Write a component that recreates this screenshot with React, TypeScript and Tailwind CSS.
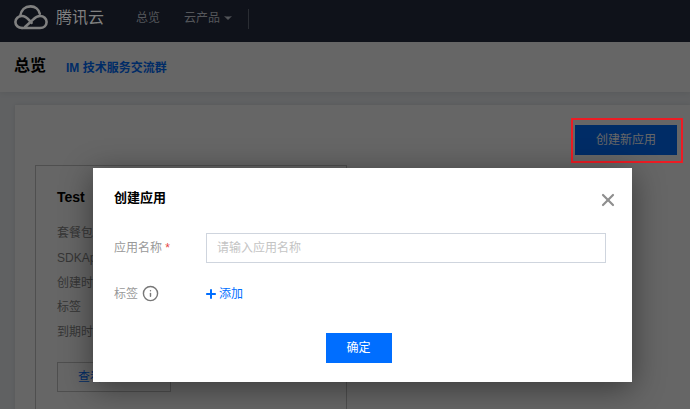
import React from "react";
import { ChevronDown, Info, Plus, X } from "lucide-react";

const cardRows = ["套餐包", "SDKAppID", "创建时间", "标签", "到期时间"];

const Logo: React.FC = () => (
  <svg width="34" height="25" viewBox="0 0 34 25" fill="none" stroke="#808080" strokeWidth="2.6" strokeLinecap="round">
    <path d="M8 23h18c3.8 0 6.6-2.6 6.6-6S29.8 11 26 11c-2.6 0-4.6 1.2-7 3.6L11 22" />
    <path d="M8 23c-3.8 0-6.6-2.6-6.6-6S4.4 11 8 11c3.4 0 5.4 2 7.4 4.3l2.2 2.5" />
    <path d="M6.2 11C7 5.2 11 1.4 16.6 1.4c4.600 0 8.200 3 9.200 7.400" />
  </svg>
);

const App: React.FC = () => {
  return (
    <div className="relative h-[409px] w-[690px] overflow-hidden bg-[#eff2f5] font-['Liberation_Sans','Noto_Sans_CJK_SC',sans-serif] text-xs">
      {/* top bar */}
      <header className="relative z-30 flex h-[42px] items-center bg-[#0f121a] pb-[7px] pl-[14px]">
        <Logo />
        <span className="ml-[8px] text-base leading-none text-[#808080]">腾讯云</span>
        <span className="ml-[32px] text-xs text-[#55575b]">总览</span>
        <span className="ml-[24px] text-xs text-[#55575b]">云产品</span>
        <ChevronDown className="ml-[2px] h-3 w-3 fill-[#55575b] text-[#55575b]" />
        <div className="ml-[14px] mt-[2px] h-[20px] w-px bg-[#2a2d33]" />
      </header>

      {/* sub header */}
      <div className="flex h-[50px] items-center bg-white pb-[2px] pl-[14px] shadow-[0_1px_6px_rgba(0,0,0,0.08)]">
        <h1 className="text-base font-bold leading-none text-black">总览</h1>
        <a className="ml-[20px] mt-[4px] text-xs font-bold text-[#006eff]">IM 技术服务交流群</a>
      </div>

      {/* content panel */}
      <main className="ml-[15px] mt-[13px] h-[320px] bg-white pl-[20px] pt-[20px] shadow-[0_0_4px_rgba(0,0,0,0.1)]">
        <div className="flex justify-end pr-[13px]">
          <button className="h-[30px] w-[102px] bg-[#006eff] text-xs text-white">创建新应用</button>
        </div>
        <div className="mt-[10px] h-[260px] w-[312px] border border-[#c5c5c5] pl-[21px] pt-[21px]">
          <h3 className="text-sm font-bold leading-5 text-black">Test</h3>
          <ul className="mt-[14px] text-xs leading-[24.75px] text-[#888]">
            {cardRows.map((row) => (
              <li key={row}>{row}</li>
            ))}
          </ul>
          <button className="mt-[17px] h-[30px] w-[114px] border border-[#c5c5c5] pl-[20px] text-left text-xs text-[#006eff]">
            查看详情
          </button>
        </div>
      </main>

      {/* dim layer */}
      <div className="absolute inset-0 z-10 bg-black/60" />

      {/* red annotation */}
      <div className="absolute left-[571px] top-[118px] z-20 h-[45px] w-[112px] border-2 border-[#ed1c24]" />

      {/* dialog */}
      <div className="absolute left-[93px] top-[168px] z-20 flex h-[214px] w-[539px] flex-col bg-white px-[21px] shadow-[0_6px_30px_rgba(0,0,0,0.45)]">
        <button className="absolute right-[14px] top-[22px] text-[#8f8f8f]">
          <X className="h-5 w-5" strokeWidth={2.6} />
        </button>
        <h2 className="mt-[20px] text-[13px] font-bold leading-5 text-black">创建应用</h2>

        <div className="mt-[25px] flex items-center">
          <label className="w-[92px] text-xs text-[#999]">
            应用名称 <span className="text-[#e54545]">*</span>
          </label>
          <input
            placeholder="请输入应用名称"
            className="h-[30px] w-[400px] border border-[#cfd5de] px-[10px] text-xs placeholder:text-[#c4c4c4]"
          />
        </div>

        <div className="mt-[22px] flex items-center">
          <label className="flex w-[92px] items-center gap-[4px] text-xs text-[#999]">
            标签
            <Info className="h-[17px] w-[17px] text-[#777]" strokeWidth={2} />
          </label>
          <a className="-ml-[2px] flex items-center gap-[1px] text-xs text-[#006eff]">
            <Plus className="h-[14px] w-[14px]" strokeWidth={3.4} />
            添加
          </a>
        </div>

        <div className="mt-[31px] flex justify-center pr-[8px]">
          <button className="h-[30px] w-[66px] bg-[#006eff] text-xs text-white">确定</button>
        </div>
      </div>
    </div>
  );
};

export default App;
